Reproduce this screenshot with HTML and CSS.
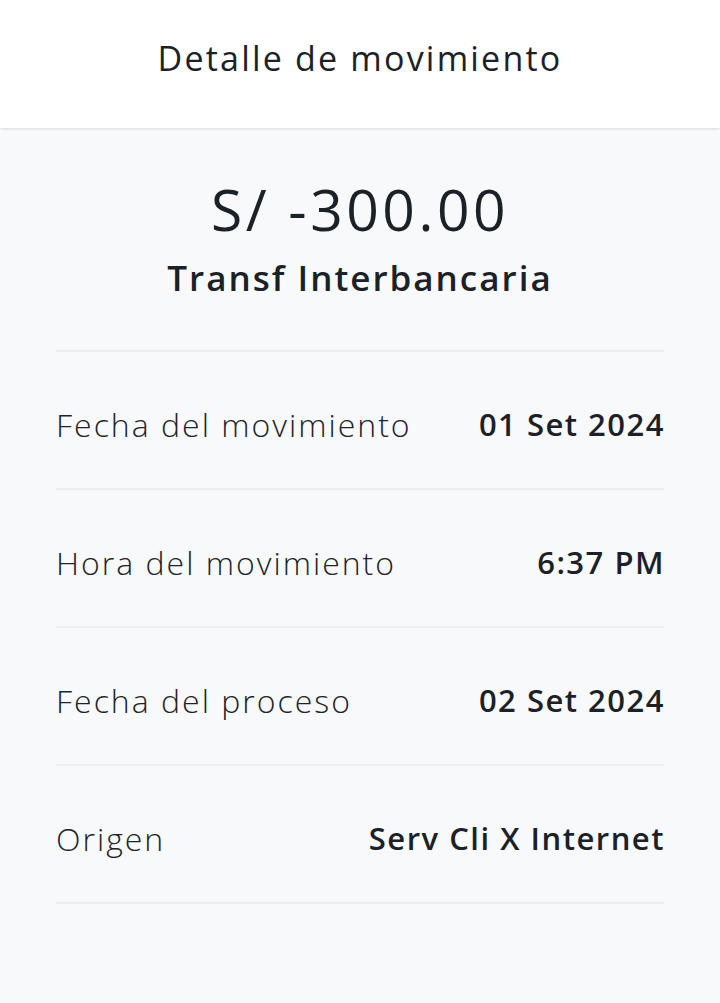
FILE: index.html
```html
<!DOCTYPE html>
<html lang="es">
<head>
    <meta charset="UTF-8">
    <meta name="viewport" content="width=device-width, initial-scale=1.0">
    <title>Detalle de movimiento</title>
    <link rel="stylesheet" href="styles.css">
</head>
<body>
    <header class="top-bar">
        <h1>Detalle de movimiento</h1>
    </header>

    <main class="detail">
        <div class="summary">
            <div class="amount">S/ -300.00</div>
            <div class="concept">Transf Interbancaria</div>
        </div>

        <ul class="rows">
            <li class="row">
                <span class="label">Fecha del movimiento</span>
                <span class="value">01 Set 2024</span>
            </li>
            <li class="row">
                <span class="label">Hora del movimiento</span>
                <span class="value">6:37 PM</span>
            </li>
            <li class="row">
                <span class="label">Fecha del proceso</span>
                <span class="value">02 Set 2024</span>
            </li>
            <li class="row">
                <span class="label">Origen</span>
                <span class="value">Serv Cli X Internet</span>
            </li>
        </ul>
    </main>
</body>
</html>
```

FILE: styles.css
```css
body {
    margin: 0;
    font-family: "Open Sans", "Noto Sans", sans-serif;
    background-color: #f8f9fa;
    color: #1b2127;
}
.top-bar {
    height: 128px;
    background-color: #ffffff;
    display: flex;
    align-items: center;
    justify-content: center;
    box-shadow: 0 1px 3px rgba(0, 0, 0, 0.12);
    position: relative;
}
.top-bar h1 {
    margin: 0;
    font-size: 34px;
    font-weight: 500;
    letter-spacing: 2.2px;
    padding-bottom: 12px;
}
.detail {
    padding: 0 56px;
}
.summary {
    text-align: center;
    padding-top: 45px;
    height: 222px;
    box-sizing: border-box;
}
.amount {
    font-size: 57px;
    line-height: 72px;
    font-weight: 400;
    letter-spacing: 3.5px;
}
.concept {
    font-size: 35px;
    line-height: 48px;
    font-weight: 600;
    letter-spacing: 2px;
    margin-top: 9px;
}
.rows {
    list-style: none;
    margin: 0;
    padding: 0;
    border-top: 2px solid #eceef0;
}
.row {
    height: 136px;
    display: flex;
    align-items: center;
    justify-content: space-between;
    border-bottom: 2px solid #eceef0;
}
.label {
    font-size: 32px;
    font-weight: 300;
    letter-spacing: 2px;
    color: #1e2429;
    padding-top: 8px;
}
.value {
    font-size: 31px;
    font-weight: 600;
    letter-spacing: 1.5px;
    padding-top: 8px;
    margin-right: -1px;
}
```
